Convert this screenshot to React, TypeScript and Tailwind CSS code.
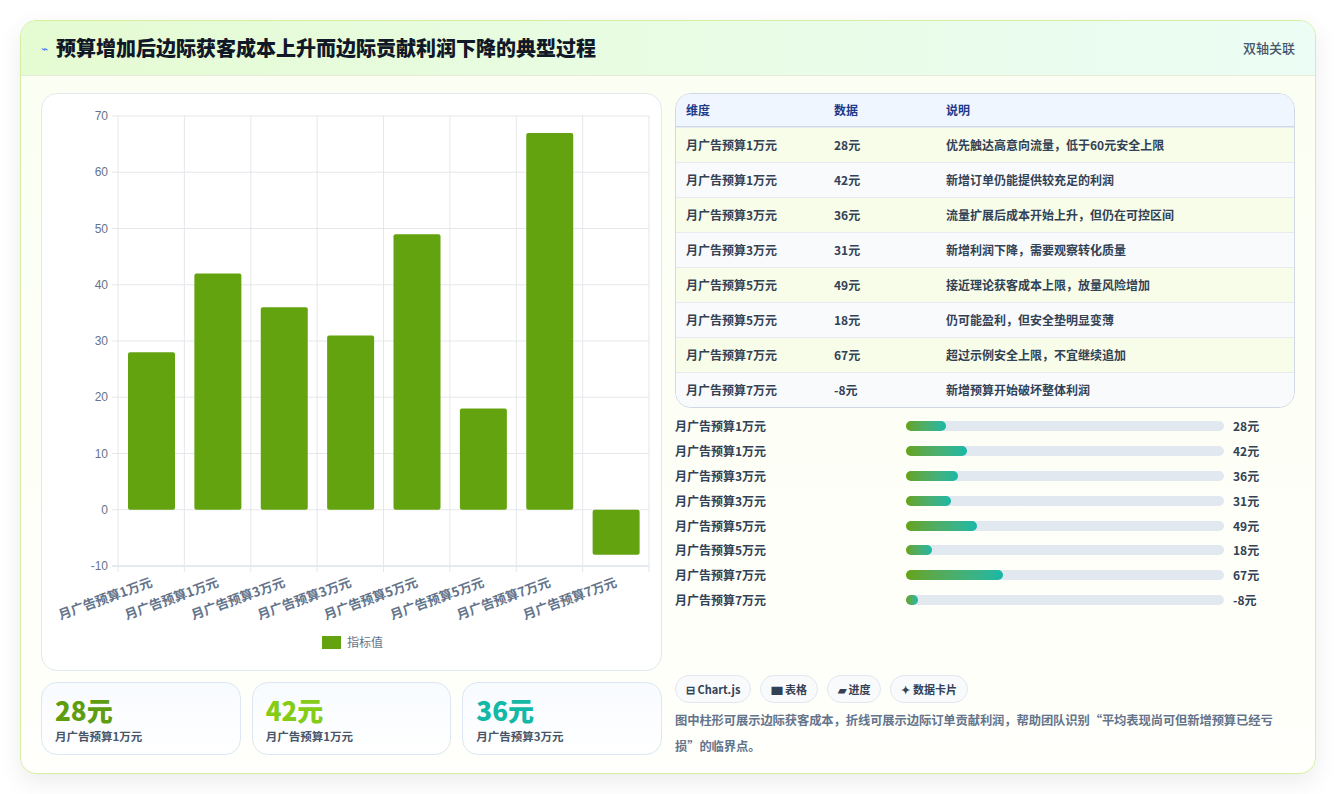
import React from "react";

const rows = [
  ["月广告预算1万元", 28, "优先触达高意向流量，低于60元安全上限"],
  ["月广告预算1万元", 42, "新增订单仍能提供较充足的利润"],
  ["月广告预算3万元", 36, "流量扩展后成本开始上升，但仍在可控区间"],
  ["月广告预算3万元", 31, "新增利润下降，需要观察转化质量"],
  ["月广告预算5万元", 49, "接近理论获客成本上限，放量风险增加"],
  ["月广告预算5万元", 18, "仍可能盈利，但安全垫明显变薄"],
  ["月广告预算7万元", 67, "超过示例安全上限，不宜继续追加"],
  ["月广告预算7万元", -8, "新增预算开始破坏整体利润"],
] as const;

const font = { fontFamily: '"Noto Sans CJK SC", "Noto Sans", sans-serif' };

function Chart() {
  const x0 = 76, x1 = 607, yTop = 22, step = 56.25;
  const zero = yTop + 7 * step;
  const cw = (x1 - x0) / 8;
  const yOf = (v: number) => zero - (v / 10) * step;
  return (
    <svg width="620" height="575" className="block">
      {[70, 60, 50, 40, 30, 20, 10, 0, -10].map((v) => (
        <g key={v}>
          <line x1={x0 - 6} x2={x1} y1={yOf(v)} y2={yOf(v)} stroke={v === -10 ? "#cbd5e1" : "#e5e7eb"} />
          <text x={x0 - 10} y={yOf(v) + 4} textAnchor="end" fontSize="12" fill="#64748b" fontFamily="Liberation Sans, sans-serif">{v}</text>
        </g>
      ))}
      {Array.from({ length: 9 }).map((_, i) => (
        <line key={i} x1={x0 + i * cw} x2={x0 + i * cw} y1={yTop} y2={yOf(-10) + 6} stroke="#e5e7eb" />
      ))}
      {rows.map((r, i) => {
        const v = r[1];
        const bx = x0 + i * cw + 10;
        const y = v >= 0 ? yOf(v) : zero;
        const h = Math.abs(yOf(v) - zero);
        return <rect key={i} x={bx} y={y} width={47} height={h} rx={2} fill="#63a30f" />;
      })}
      {rows.map((r, i) => (
        <text key={i} x={x0 + (i + 0.5) * cw + 2} y={yOf(-10) + 20} textAnchor="end" fontSize="13" fontWeight="bold" fill="#64748b" transform={`rotate(-20 ${x0 + (i + 0.5) * cw + 2} ${yOf(-10) + 20})`} style={font}>{r[0]}</text>
      ))}
      <rect x={280} y={542} width={19} height={13} fill="#63a30f" />
      <text x={305} y={553} fontSize="12" fill="#64748b" style={font}>指标值</text>
    </svg>
  );
}

export default function App() {
  return (
    <div className="w-[1336px] h-[794px] bg-white p-5" style={font}>
      <div className="h-[754px] rounded-2xl border border-[#d4ef9f] shadow-[0_8px_24px_rgba(0,0,0,0.08)] overflow-hidden bg-gradient-to-b from-[#fbfff2] to-[#fffffb]">
        <div className="h-[55px] flex items-center justify-between px-5 bg-gradient-to-r from-[#e5fbd2] to-[#ecfdf5] border-b border-[#e2ecd6]">
          <div className="flex items-center gap-2">
            <span className="text-[12px] text-[#3b82f6]">⌁</span>
            <span className="text-[20px] font-black text-[#111827]">预算增加后边际获客成本上升而边际贡献利润下降的典型过程</span>
          </div>
          <span className="text-[13px] text-[#475569] font-medium">双轴关联</span>
        </div>
        <div className="flex gap-[14px] px-5 pt-[17px]">
          <div className="w-[621px] flex flex-col gap-[11px]">
            <div className="h-[578px] bg-white rounded-2xl border border-[#e2e8f0]">
              <Chart />
            </div>
            <div className="grid grid-cols-3 gap-[11px]">
              {[["28元", "#5c9e10", "月广告预算1万元"], ["42元", "#84cc16", "月广告预算1万元"], ["36元", "#14b8a6", "月广告预算3万元"]].map(([v, c, l], i) => (
                <div key={i} className="h-[73px] rounded-2xl border border-[#dbe7f3] bg-gradient-to-b from-[#f8fbff] to-white px-[13px] pt-[9px]">
                  <div className="text-[26px] font-black leading-[36px]" style={{ color: c }}>{v}</div>
                  <div className="text-[11.5px] font-bold text-[#475569]">{l}</div>
                </div>
              ))}
            </div>
          </div>
          <div className="flex-1 flex flex-col -ml-[1px]">
            <div className="rounded-2xl border border-[#cfd8e3] overflow-hidden text-[12px] font-bold">
              <div className="h-[33px] flex items-center bg-[#eff6ff] border-b border-[#cfd8e3] text-[#1e3a8a] px-[10px]">
                <span className="w-[148px]">维度</span><span className="w-[112px]">数据</span><span>说明</span>
              </div>
              {rows.map((r, i) => (
                <div key={i} className={`h-[35px] flex items-center px-[10px] text-[#334155] border-t border-[#e6ebf1] first:border-t-0 ${i % 2 === 0 ? "bg-[#f7fde8]" : "bg-[#f8fafc]"}`}>
                  <span className="w-[148px]">{r[0]}</span><span className="w-[112px]">{r[1]}元</span><span>{r[2]}</span>
                </div>
              ))}
            </div>
            <div className="mt-[6px] flex flex-col">
              {rows.map((r, i) => (
                <div key={i} className="h-[24.8px] flex items-center text-[12px] font-bold text-[#334155]">
                  <span className="w-[231px]">{r[0]}</span>
                  <div className="w-[318px] h-[10px] rounded-full bg-[#e2e8f0]">
                    <div className="h-full rounded-full bg-gradient-to-r from-[#65a30d] to-[#14b8a6]" style={{ width: `${Math.max(r[1] / 220 * 100, 3.8)}%` }} />
                  </div>
                  <span className="ml-[9px]">{r[1]}元</span>
                </div>
              ))}
            </div>
            <div className="mt-[63px] flex gap-[9px]">
              {["⊟ Chart.js", "▆ 表格", "▰ 进度", "✦ 数据卡片"].map((t) => (
                <span key={t} className="h-[28px] px-[10px] flex items-center rounded-full border border-[#e2e8f0] bg-[#f8fafc] text-[11px] font-bold text-[#334155]">{t}</span>
              ))}
            </div>
            <p className="mt-[4px] text-[12.3px] leading-[26px] font-bold text-[#64748b] tracking-[-0.1px]">图中柱形可展示边际获客成本，折线可展示边际订单贡献利润，帮助团队识别“平均表现尚可但新增预算已经亏损”的临界点。</p>
          </div>
        </div>
      </div>
    </div>
  );
}
